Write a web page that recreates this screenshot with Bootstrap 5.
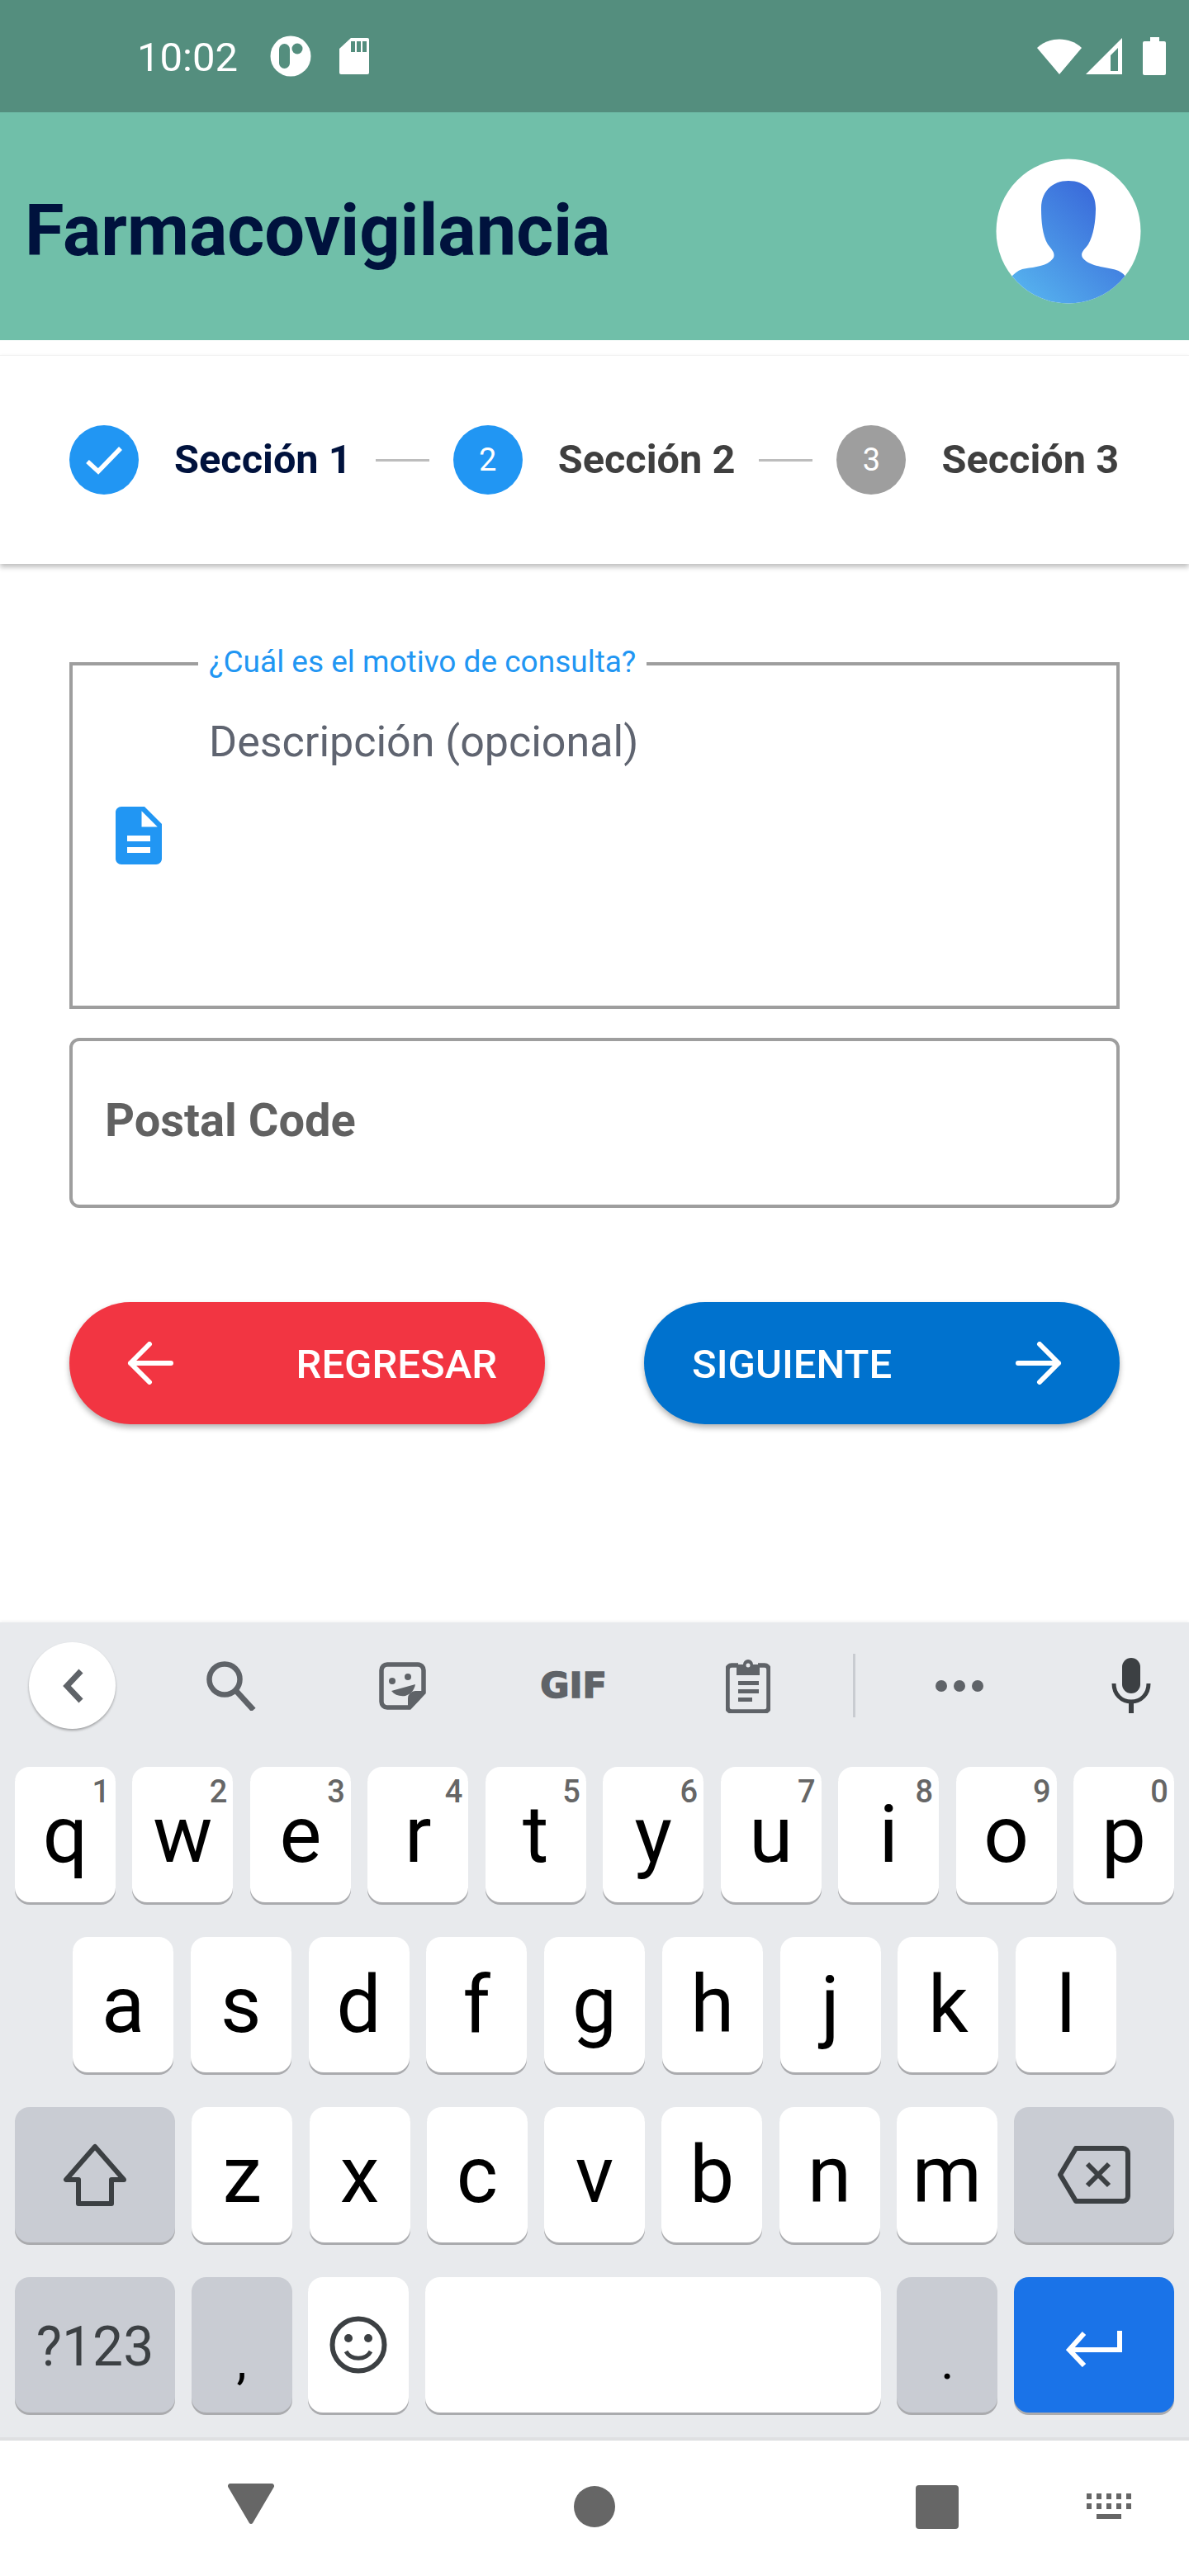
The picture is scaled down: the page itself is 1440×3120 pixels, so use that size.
<!DOCTYPE html>
<html lang="es">
<head>
  <meta charset="UTF-8" />
  <meta name="viewport" content="width=device-width, initial-scale=1.0" />
  <title>Farmacovigilancia</title>
  <link href="https://cdn.jsdelivr.net/npm/bootstrap@5.3.2/dist/css/bootstrap.min.css" rel="stylesheet" />
  <style>
    body { font-family: Roboto, "Liberation Sans", sans-serif; background: #fff; height: 3120px; overflow: hidden; }
    svg { display: block; flex-shrink: 0; }

    .status-bar { height: 136px; background: #548e7e; color: #fff; padding-left: 166px; padding-right: 28px; }
    .status-time { font-size: 49px; width: 161px; line-height: 1; margin-top: 2px; }
    .status-sd { margin-left: 33px; }
    .status-signal { margin-left: 3px; }
    .status-batt { margin-left: 24px; }
    .app-head { height: 276px; background: #70bfa9; padding: 12px 58px 0 30px; }
    .app-title { font-size: 86.5px; font-weight: 700; color: #00123d; margin: 0; line-height: 1; }

    .stepper { margin-top: 18px; height: 253px; border-top: 1px solid #f2f2f2; padding: 0 84px; box-shadow: 0 4px 6px rgba(0,0,0,.25); }
    .step-dot { width: 84px; height: 84px; border-radius: 50%; color: #fff; font-size: 38px; flex: none; }
    .step-done, .step-now { background: #2196f3; }
    .step-next { background: #9e9e9e; }
    .step-name { font-size: 48.7px; font-weight: 700; color: #3f3f3f; margin-left: 43px; white-space: nowrap; }
    .step-name-done { color: #00123d; }
    .step-line { width: 65px; height: 3px; background: #bdbdbd; margin: 0 29px; flex: none; }

    .form-area { padding: 119px 84px 0; }
    .motivo-box { height: 420px; border: 4px solid #9e9e9e; padding-left: 52px; }
    .motivo-label { top: -24px; left: 152px; background: #fff; padding: 0 13px; color: #2196f3; font-size: 37px; line-height: 40px; }
    .motivo-text { font-size: 52px; color: #5f6470; padding-left: 57px; padding-top: 59px; line-height: 68px; }
    .motivo-icon { margin-top: 171px; }
    .postal-box { height: 206px; margin-top: 35px; border: 4px solid #9e9e9e; border-radius: 12px; padding: 0 0 6px 39px; font-size: 56px; font-weight: 700; color: #616161; }
    .action-row { margin-top: 114px; }
    .action-btn { width: 576px; height: 148px; border: 0; border-radius: 74px; color: #fff; font-size: 49px; font-weight: 500; box-shadow: 0 4px 7px rgba(0,0,0,.3); padding: 0 58px; }
    .action-btn:hover { color: #fff; }
    .action-label { padding-top: 3px; }
    .btn-back { background: #f23542; padding: 0 58px 0 70px; }
    .btn-next { background: #0072ce; padding: 0 70px 0 58px; }
    .btn-back:hover { background: #f23542; }
    .btn-next:hover { background: #0072ce; }

    .kbd { height: 991px; background: #e8eaed; border-bottom: 4px solid #dfe0e2; box-shadow: 0 -2px 3px rgba(0,0,0,.04); }
    .kbd-tools { height: 175px; padding: 0 0 22px 35px; }
    .tool-back { width: 105px; height: 105px; border-radius: 50%; background: #fff; box-shadow: 0 2px 3px rgba(0,0,0,.3); flex: none; }
    .tool-search { margin-left: 110px; }
    .tool-sticker { margin-left: 149px; }
    .tool-gif { margin-left: 138px; width: 81px; font-family: "DejaVu Sans", sans-serif; font-weight: 700; font-size: 43px; line-height: 1; color: #5f6368; -webkit-text-stroke: 1.5px #5f6368; }
    .tool-clip { margin-left: 144px; }
    .tool-divider { margin-left: 100px; width: 3px; height: 77px; background: #c9ccd1; }
    .tool-dots { margin-left: 96px; }
    .tool-mic { margin-left: 154px; }

    .kbd-keys { padding: 0 18px; gap: 40px; }
    .kbd-row { height: 166px; }
    .kbd-row-mid { padding: 0 70px; }
    .kbd-key { width: 122px; height: 164px; background: #fff; border-radius: 18px; box-shadow: 0 3px 0 #aaabae; font-family: Roboto, sans-serif; font-size: 96px; line-height: 1; color: #000; flex: none; }
    .kbd-num { top: 11px; right: 7px; font-size: 38px; font-weight: 500; color: #666; }
    .key-dark { background: #c9ccd3; }
    .key-wide { width: 194px; }
    .key-blank { width: 552px; }
    .key-blue { background: #1a73e8; }
    .key-sym { font-size: 66px; color: #3c4043; padding-top: 6px; }
    .key-mark { font-size: 62px; padding-top: 40px; }
    .key-enter-icon { margin-top: 9px; }

    .nav-strip { height: 164px; padding-bottom: 4px; }
    .nav-back { margin-left: 276px; margin-bottom: 7px; }
    .nav-home { margin-left: 363px; }
    .nav-recent { margin-left: 364px; }
    .nav-kbd { margin-left: 155px; }
  </style>
</head>
<body class="d-flex flex-column">
  <div class="status-bar d-flex align-items-center flex-shrink-0">
    <div class="status-time">10:02</div>
    <svg width="50" height="50" viewBox="0 0 50 50"><circle cx="25" cy="25" r="24.5" fill="#fff"/><rect x="11" y="10" width="13" height="30" rx="6.5" fill="#548e7e"/><circle cx="33" cy="16" r="6.5" fill="#548e7e"/></svg>
    <svg class="status-sd" width="38" height="46" viewBox="0 0 38 46"><path d="M15 1h20a2 2 0 0 1 2 2v40a2 2 0 0 1-2 2H3a2 2 0 0 1-2-2V14z" fill="#fff"/><path d="M15 5h5v13h-5zM22 5h5v13h-5zM29 5h5v13h-5z" fill="#548e7e"/></svg>
    <div class="ms-auto d-flex align-items-center">
      <svg width="56" height="46" viewBox="0 0 56 46"><path d="M1 13C15-1 41-1 55 13L28 45z" fill="#fff"/></svg>
      <svg class="status-signal" width="46" height="46" viewBox="0 0 46 46"><path fill-rule="evenodd" d="M1 45 45 1v44zM31 41h9V13l-9 9z" fill="#fff"/></svg>
      <svg class="status-batt" width="28" height="46" viewBox="0 0 28 46"><path d="M9 0h11v5h6a2 2 0 0 1 2 2v37a2 2 0 0 1-2 2H2a2 2 0 0 1-2-2V7a2 2 0 0 1 2-2h7z" fill="#fff"/></svg>
    </div>
  </div>

  <header class="app-head d-flex align-items-center justify-content-between flex-shrink-0">
    <h1 class="app-title">Farmacovigilancia</h1>
    <svg width="176" height="176" viewBox="0 0 176 176">
      <defs>
        <linearGradient id="userGrad" x1="0.1" y1="1" x2="0.9" y2="0.1"><stop offset="0" stop-color="#58b8f0"/><stop offset="1" stop-color="#3763d8"/></linearGradient>
        <clipPath id="userClip"><circle cx="88" cy="88" r="87.5"/></clipPath>
      </defs>
      <circle cx="88" cy="88" r="87.5" fill="#fff"/>
      <path clip-path="url(#userClip)" fill="url(#userGrad)" d="M88 27C68 27 55 40 55 60c0 14 1 32 8 44 5 7 9 10 7 16-8 12-26 11-38 14-6 2-10 6-14 10l-4 36h148l-4-36c-4-6-10-9-16-10-12-3-30-4-37-14-3-6 2-9 7-16 7-12 9-30 9-44 0-20-13-33-33-33z"/>
    </svg>
  </header>

  <section class="stepper d-flex align-items-center flex-shrink-0">
    <div class="step-dot step-done d-flex align-items-center justify-content-center">
      <svg width="48" height="48" viewBox="0 0 48 48"><path d="M4 26l13 12L44 10" fill="none" stroke="#fff" stroke-width="5.5"/></svg>
    </div>
    <span class="step-name step-name-done">Sección 1</span>
    <span class="step-line"></span>
    <div class="step-dot step-now d-flex align-items-center justify-content-center">2</div>
    <span class="step-name">Sección 2</span>
    <span class="step-line"></span>
    <div class="step-dot step-next d-flex align-items-center justify-content-center">3</div>
    <span class="step-name">Sección 3</span>
  </section>

  <main class="form-area flex-grow-1">
    <div class="motivo-box position-relative d-flex">
      <span class="motivo-label position-absolute">¿Cuál es el motivo de consulta?</span>
      <svg class="motivo-icon" width="56" height="70" viewBox="4 2 16 20"><path fill="#2196f3" d="M14 2H6c-1.1 0-2 .9-2 2v16c0 1.1.9 2 2 2h12c1.1 0 2-.9 2-2V8l-6-6zm2 16H8v-2h8v2zm0-4H8v-2h8v2zm-3-5V3.5L18.5 9H13z"/></svg>
      <div class="motivo-text">Descripción (opcional)</div>
    </div>
    <div class="postal-box d-flex align-items-center">Postal Code</div>
    <div class="action-row d-flex justify-content-between">
      <button type="button" class="btn action-btn btn-back d-flex align-items-center justify-content-between">
        <svg width="56" height="52" viewBox="0 0 56 52"><path d="M53 26H4M27 3 4 26l23 23" fill="none" stroke="#fff" stroke-width="6" stroke-linecap="round" stroke-linejoin="round"/></svg>
        <span class="action-label">REGRESAR</span>
      </button>
      <button type="button" class="btn action-btn btn-next d-flex align-items-center justify-content-between">
        <span class="action-label">SIGUIENTE</span>
        <svg width="56" height="52" viewBox="0 0 56 52"><path d="M3 26h49M29 3l23 23-23 23" fill="none" stroke="#fff" stroke-width="6" stroke-linecap="round" stroke-linejoin="round"/></svg>
      </button>
    </div>
  </main>

  <div class="kbd flex-shrink-0">
    <div class="kbd-tools d-flex align-items-center">
      <div class="tool-back d-flex align-items-center justify-content-center">
        <svg width="30" height="42" viewBox="0 0 30 42"><path d="M25 3 8 21l17 18" fill="none" stroke="#5f6368" stroke-width="7"/></svg>
      </div>
      <svg class="tool-search" width="60" height="60" viewBox="0 0 60 60"><circle cx="22" cy="22" r="18.5" fill="none" stroke="#5f6368" stroke-width="6.5"/><path d="M36 36l21 23" stroke="#5f6368" stroke-width="7"/></svg>
      <svg class="tool-sticker" width="57" height="58" viewBox="0 0 57 58"><path d="M10 3h37a7 7 0 0 1 7 7v27L37 55H10a7 7 0 0 1-7-7V10a7 7 0 0 1 7-7z" fill="none" stroke="#5f6368" stroke-width="5.5"/><path d="M54 36H44a8 8 0 0 0-8 8v11z" fill="#5f6368" stroke="#5f6368" stroke-width="2"/><circle cx="16" cy="23" r="4" fill="#5f6368"/><circle cx="35" cy="18" r="4" fill="#5f6368"/><path d="M15 35l29-8c-1 7-6 12-12 14-7 1-13-1-17-6z" fill="#5f6368"/></svg>
      <div class="tool-gif text-center">GIF</div>
      <svg class="tool-clip" width="54" height="66" viewBox="0 0 54 66"><path d="M15 8H7a5 5 0 0 0-5 5v46a5 5 0 0 0 5 5h40a5 5 0 0 0 5-5V13a5 5 0 0 0-5-5h-8" fill="none" stroke="#5f6368" stroke-width="5.5"/><path d="M13 7h8a6 6 0 0 1 12 0h8v13H13z" fill="#5f6368"/><circle cx="27" cy="8" r="2.5" fill="#e8eaed"/><path d="M15 27h25v5H15zM15 37h25v5H15zM15 47h17v5H15z" fill="#5f6368"/></svg>
      <div class="tool-divider"></div>
      <svg class="tool-dots" width="60" height="16" viewBox="0 0 60 16"><circle cx="8" cy="8" r="7" fill="#5f6368"/><circle cx="30" cy="8" r="7" fill="#5f6368"/><circle cx="52" cy="8" r="7" fill="#5f6368"/></svg>
      <svg class="tool-mic" width="48" height="67" viewBox="0 0 48 67"><rect x="13" y="0" width="22" height="43" rx="11" fill="#3c4043"/><path d="M3 31c0 13 9 22 21 22s21-9 21-22" fill="none" stroke="#3c4043" stroke-width="5"/><path d="M24 52v15" stroke="#3c4043" stroke-width="6"/></svg>
    </div>
    <div class="kbd-keys d-flex flex-column">
      <div class="kbd-row d-flex justify-content-between">
        <div class="kbd-key position-relative d-flex align-items-center justify-content-center">q<span class="kbd-num position-absolute">1</span></div>
        <div class="kbd-key position-relative d-flex align-items-center justify-content-center">w<span class="kbd-num position-absolute">2</span></div>
        <div class="kbd-key position-relative d-flex align-items-center justify-content-center">e<span class="kbd-num position-absolute">3</span></div>
        <div class="kbd-key position-relative d-flex align-items-center justify-content-center">r<span class="kbd-num position-absolute">4</span></div>
        <div class="kbd-key position-relative d-flex align-items-center justify-content-center">t<span class="kbd-num position-absolute">5</span></div>
        <div class="kbd-key position-relative d-flex align-items-center justify-content-center">y<span class="kbd-num position-absolute">6</span></div>
        <div class="kbd-key position-relative d-flex align-items-center justify-content-center">u<span class="kbd-num position-absolute">7</span></div>
        <div class="kbd-key position-relative d-flex align-items-center justify-content-center">i<span class="kbd-num position-absolute">8</span></div>
        <div class="kbd-key position-relative d-flex align-items-center justify-content-center">o<span class="kbd-num position-absolute">9</span></div>
        <div class="kbd-key position-relative d-flex align-items-center justify-content-center">p<span class="kbd-num position-absolute">0</span></div>
      </div>
      <div class="kbd-row kbd-row-mid d-flex justify-content-between">
        <div class="kbd-key d-flex align-items-center justify-content-center">a</div>
        <div class="kbd-key d-flex align-items-center justify-content-center">s</div>
        <div class="kbd-key d-flex align-items-center justify-content-center">d</div>
        <div class="kbd-key d-flex align-items-center justify-content-center">f</div>
        <div class="kbd-key d-flex align-items-center justify-content-center">g</div>
        <div class="kbd-key d-flex align-items-center justify-content-center">h</div>
        <div class="kbd-key d-flex align-items-center justify-content-center">j</div>
        <div class="kbd-key d-flex align-items-center justify-content-center">k</div>
        <div class="kbd-key d-flex align-items-center justify-content-center">l</div>
      </div>
      <div class="kbd-row d-flex justify-content-between">
        <div class="kbd-key key-dark key-wide d-flex align-items-center justify-content-center">
          <svg width="80" height="76" viewBox="0 0 80 76"><path d="M40 4 5 44h15v29h40V44h15z" fill="none" stroke="#3c4043" stroke-width="6" stroke-linejoin="round"/></svg>
        </div>
        <div class="kbd-key d-flex align-items-center justify-content-center">z</div>
        <div class="kbd-key d-flex align-items-center justify-content-center">x</div>
        <div class="kbd-key d-flex align-items-center justify-content-center">c</div>
        <div class="kbd-key d-flex align-items-center justify-content-center">v</div>
        <div class="kbd-key d-flex align-items-center justify-content-center">b</div>
        <div class="kbd-key d-flex align-items-center justify-content-center">n</div>
        <div class="kbd-key d-flex align-items-center justify-content-center">m</div>
        <div class="kbd-key key-dark key-wide d-flex align-items-center justify-content-center">
          <svg width="88" height="70" viewBox="0 0 88 70"><path d="M22 3h57a6 6 0 0 1 6 6v52a6 6 0 0 1-6 6H22L3 35z" fill="none" stroke="#3c4043" stroke-width="6" stroke-linejoin="round"/><path d="M36 22l26 26M62 22 36 48" fill="none" stroke="#3c4043" stroke-width="6"/></svg>
        </div>
      </div>
      <div class="kbd-row d-flex justify-content-between">
        <div class="kbd-key key-dark key-wide key-sym d-flex align-items-center justify-content-center">?123</div>
        <div class="kbd-key key-dark key-mark d-flex align-items-center justify-content-center">,</div>
        <div class="kbd-key d-flex align-items-center justify-content-center">
          <svg width="70" height="70" viewBox="0 0 70 70"><circle cx="35" cy="35" r="31.5" fill="none" stroke="#3c4043" stroke-width="6"/><circle cx="23" cy="27" r="5" fill="#3c4043"/><circle cx="47" cy="27" r="5" fill="#3c4043"/><path d="M20 43c6 11 24 11 30 0" fill="none" stroke="#3c4043" stroke-width="5"/></svg>
        </div>
        <div class="kbd-key key-blank"></div>
        <div class="kbd-key key-dark key-mark d-flex align-items-center justify-content-center">.</div>
        <div class="kbd-key key-blue key-wide d-flex align-items-center justify-content-center">
          <svg class="key-enter-icon" width="68" height="44" viewBox="0 0 68 44"><path d="M65 0v23H6M22 3 4 23l18 19" fill="none" stroke="#fff" stroke-width="6"/></svg>
        </div>
      </div>
    </div>
  </div>

  <nav class="nav-strip d-flex align-items-center flex-shrink-0">
    <svg class="nav-back" width="56" height="50" viewBox="0 0 56 50"><path d="M3 0h50a3 3 0 0 1 2.6 4.5L30 48a2.5 2.5 0 0 1-4 0L.4 4.5A3 3 0 0 1 3 0z" fill="#666"/></svg>
    <svg class="nav-home" width="50" height="50" viewBox="0 0 50 50"><circle cx="25" cy="25" r="25" fill="#666"/></svg>
    <svg class="nav-recent" width="52" height="53" viewBox="0 0 52 53"><rect width="52" height="53" rx="4" fill="#666"/></svg>
    <svg class="nav-kbd" width="54" height="32" viewBox="0 0 54 32"><path fill="#666" d="M0 0h6v7H0zM12 0h6v7h-6zM24 0h6v7h-6zM36 0h6v7h-6zM48 0h6v7h-6zM0 12h6v7H0zM12 12h6v7h-6zM24 12h6v7h-6zM36 12h6v7h-6zM48 12h6v7h-6zM12 25h30v6H12z"/></svg>
  </nav>
</body>
</html>
